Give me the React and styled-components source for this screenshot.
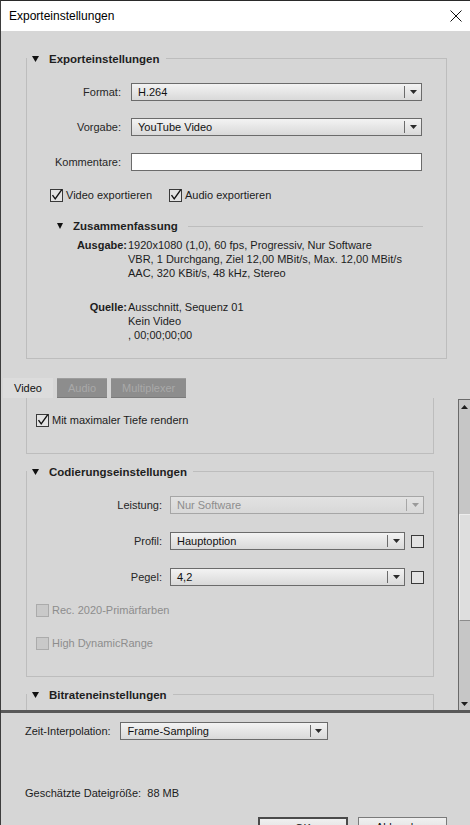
import React from 'react';
import styled, { createGlobalStyle } from 'styled-components';

const GlobalStyle = createGlobalStyle`
  html, body {
    margin: 0;
    padding: 0;
    background: #d6d6d6;
  }
  body {
    font-family: "Liberation Sans", Arial, sans-serif;
    font-size: 11px;
    color: #1c1c1c;
  }
  * { box-sizing: border-box; }
`;

const Window = styled.div`
  width: 470px;
  height: 825px;
  border-top: 1px solid #2a2a2a;
  border-left: 1px solid #3d3d3d;
  background: #d6d6d6;
  display: flex;
  flex-direction: column;
  overflow: hidden;
`;

const TitleBar = styled.div`
  flex: 0 0 30px;
  background: #ffffff;
  display: flex;
  align-items: center;
  justify-content: space-between;
  padding: 0 8px;
  font-size: 12px;
  color: #000;
`;

const Group = styled.fieldset`
  margin: ${p => p.$top}px ${p => p.$right}px 0 25px;
  padding: ${p => p.$pt}px 0 ${p => p.$pb}px;
  border: 1px solid #bdbdbd;
  min-width: 0;
  flex-shrink: 0;
`;

const Legend = styled.legend`
  padding: 0 6px 0 5px;
  margin: 0;
  line-height: 14px;
`;

const HeaderInner = styled.span`
  display: inline-flex;
  align-items: center;
  gap: 10px;
  font-weight: bold;
  font-size: 11.5px;
  color: #1e1e1e;
`;

const FormGrid = styled.div`
  display: grid;
  grid-template-columns: ${p => p.$label}px 1fr;
  column-gap: ${p => p.$gap}px;
  row-gap: ${p => p.$rowGap}px;
  padding-right: ${p => p.$pr}px;
  align-items: center;
`;

const FieldLabel = styled.span`
  text-align: right;
  white-space: nowrap;
  color: #262626;
`;

const ControlCell = styled.div`
  display: flex;
  align-items: center;
  gap: 6px;
  min-width: 0;
`;

const SelectBox = styled.div`
  height: 18px;
  flex: ${p => (p.$width ? `0 0 ${p.$width}px` : '1')};
  min-width: 0;
  border: 1px solid ${p => (p.$disabled ? '#a6a6a6' : '#6b6b6b')};
  background: ${p => (p.$disabled
    ? 'linear-gradient(#e2e2e2, #d8d8d8)'
    : 'linear-gradient(#f3f3f3, #d9d9d9)')};
  color: ${p => (p.$disabled ? '#8d8d8d' : '#111')};
  display: flex;
  align-items: center;
`;

const SelectValue = styled.span`
  flex: 1;
  padding-left: ${p => p.$pad || 6}px;
  line-height: 16px;
  white-space: nowrap;
  overflow: hidden;
`;

const SelectArrow = styled.span`
  flex: 0 0 17px;
  height: 12px;
  border-left: 1px solid ${p => (p.$disabled ? '#a6a6a6' : '#6b6b6b')};
  display: flex;
  align-items: center;
  justify-content: center;
`;

const TextInput = styled.div`
  height: 18px;
  background: #ffffff;
  border: 1px solid #6b6b6b;
`;

const CheckRow = styled.div`
  display: flex;
  align-items: center;
  gap: 17px;
  height: 14px;
  margin-top: ${p => p.$mt}px;
  padding-left: ${p => p.$pl}px;
`;

const CheckItem = styled.label`
  display: flex;
  align-items: center;
  gap: 3px;
  white-space: nowrap;
  color: ${p => (p.$disabled ? '#8d8d8d' : '#1c1c1c')};
`;

const Box = styled.span`
  flex: 0 0 13px;
  width: 13px;
  height: 13px;
  border: 1px solid ${p => (p.$disabled ? '#ababab' : '#3a3a3a')};
  background: ${p => (p.$disabled ? '#c9c9c9' : '#e3e3e3')};
  display: flex;
`;

const SubHeader = styled.div`
  display: flex;
  align-items: center;
  gap: 10px;
  height: 14px;
  margin: 17px 23px 0 30px;
  font-weight: bold;
  font-size: 11.5px;
  color: #1e1e1e;
`;

const SubLine = styled.span`
  flex: 1;
  height: 1px;
  background: #bdbdbd;
`;

const Summary = styled.div`
  display: grid;
  grid-template-columns: 100px 1fr;
  column-gap: 1px;
  row-gap: 20px;
  margin-top: 5px;
  line-height: 14px;
`;

const SummaryLabel = styled.span`
  font-weight: bold;
  text-align: right;
`;

const TabStrip = styled.div`
  flex: 0 0 19px;
  display: flex;
  gap: 4px;
  padding-left: 2px;
  margin-top: 19px;
`;

const Tab = styled.div`
  padding: 0 11px;
  line-height: 18px;
  background: ${p => (p.$active ? '#dcdcdc' : '#8d8d8d')};
  color: ${p => (p.$active ? '#111' : '#a9a9a9')};
  border-top: 1px solid ${p => (p.$active ? '#dcdcdc' : '#9d9d9d')};
  border-bottom: ${p => (p.$active ? 'none' : '1px solid #7b7b7b')};
`;

const TabPanel = styled.div`
  flex: 1;
  min-height: 0;
  display: flex;
`;

const PanelContent = styled.div`
  flex: 1;
  min-width: 0;
  overflow: hidden;
`;

const ClippedBox = styled.div`
  margin: 0 24px 0 25px;
  padding: 15px 0 26px 9px;
  border: 1px solid #bdbdbd;
  border-top: none;
`;

const ScrollBar = styled.div`
  flex: 0 0 12px;
  margin-top: 1px;
  border-left: 1px solid #6a6a6a;
  border-top: 1px solid #6a6a6a;
  background: #c6c6c6;
  display: flex;
  flex-direction: column;
`;

const ScrollButton = styled.div`
  flex: 0 0 13px;
  display: flex;
  align-items: center;
  justify-content: center;
`;

const ScrollTrack = styled.div`
  flex: 1;
  display: flex;
  flex-direction: column;
`;

const Thumb = styled.div`
  margin-top: ${p => p.$offset}px;
  height: ${p => p.$size}px;
  background: #dedede;
  border-left: 1px solid #f2f2f2;
  border-top: 1px solid #ededed;
  border-bottom: 1px solid #8c8c8c;
`;

const Divider = styled.div`
  flex: 0 0 3px;
  background: #595959;
`;

const Footer = styled.div`
  flex: 0 0 112px;
  padding: 9px 23px 0 24px;
  overflow: hidden;
`;

const FooterRow = styled.div`
  display: flex;
  align-items: center;
  gap: 9px;
`;

const SizeText = styled.div`
  margin-top: 46px;
  line-height: 14px;
  white-space: pre;
`;

const Buttons = styled.div`
  display: flex;
  justify-content: flex-end;
  gap: 10px;
  margin-top: 17px;
`;

const Button = styled.div`
  width: ${p => p.$width}px;
  height: 22px;
  border: ${p => (p.$default ? '2px solid #4a4a4a' : '1px solid #7a7a7a')};
  background: linear-gradient(#f0f0f0, #dadada);
  text-align: center;
  line-height: 18px;
  color: #111;
`;

function Triangle({ w = 7, h = 6, color = '#111', up }) {
  return (
    <svg width={w} height={h} viewBox={`0 0 ${w} ${h}`}>
      <path d={up ? `M0 ${h}H${w}L${w / 2} 0z` : `M0 0H${w}L${w / 2} ${h}z`} fill={color} />
    </svg>
  );
}

function Select({ value, disabled, width, pad }) {
  return (
    <SelectBox $disabled={disabled} $width={width}>
      <SelectValue $pad={pad}>{value}</SelectValue>
      <SelectArrow $disabled={disabled}>
        <Triangle w={7} h={4} color={disabled ? '#9a9a9a' : '#2b2b2b'} />
      </SelectArrow>
    </SelectBox>
  );
}

function Checkbox({ checked, disabled, label }) {
  return (
    <CheckItem $disabled={disabled}>
      <Box $disabled={disabled}>
        {checked && (
          <svg width="13" height="13" viewBox="0 0 13 13" style={{ overflow: 'visible', margin: '-1px' }}>
            <path d="M2.5 6.2L5.2 9.8L11.8 0.6" fill="none" stroke="#111" strokeWidth="1.4" />
          </svg>
        )}
      </Box>
      {label}
    </CheckItem>
  );
}

function GroupHeader({ title }) {
  return (
    <Legend>
      <HeaderInner>
        <Triangle />
        {title}
      </HeaderInner>
    </Legend>
  );
}

export default function App() {
  return (
    <>
      <GlobalStyle />
      <Window>
        <TitleBar>
          <span>Exporteinstellungen</span>
          <svg width="12" height="12" viewBox="0 0 12 12">
            <path d="M0.5 0.5L11.5 11.5M11.5 0.5L0.5 11.5" stroke="#111" strokeWidth="1" />
          </svg>
        </TitleBar>

        <Group $top={20} $right={23} $pt={17} $pb={16}>
          <GroupHeader title="Exporteinstellungen" />
          <FormGrid $label={94} $gap={10} $rowGap={17} $pr={24}>
            <FieldLabel>Format:</FieldLabel>
            <Select value="H.264" />
            <FieldLabel>Vorgabe:</FieldLabel>
            <Select value="YouTube Video" />
            <FieldLabel>Kommentare:</FieldLabel>
            <TextInput />
          </FormGrid>
          <CheckRow $mt={17} $pl={23}>
            <Checkbox checked label="Video exportieren" />
            <Checkbox checked label="Audio exportieren" />
          </CheckRow>
          <SubHeader>
            <Triangle w={6} h={6} />
            Zusammenfassung
            <SubLine />
          </SubHeader>
          <Summary>
            <SummaryLabel>Ausgabe:</SummaryLabel>
            <div>
              1920x1080 (1,0), 60 fps, Progressiv, Nur Software<br />
              VBR, 1 Durchgang, Ziel 12,00 MBit/s, Max. 12,00 MBit/s<br />
              AAC, 320 KBit/s, 48 kHz, Stereo
            </div>
            <SummaryLabel>Quelle:</SummaryLabel>
            <div>
              Ausschnitt, Sequenz 01<br />
              Kein Video<br />
              , 00;00;00;00
            </div>
          </Summary>
        </Group>

        <TabStrip>
          <Tab $active>Video</Tab>
          <Tab>Audio</Tab>
          <Tab>Multiplexer</Tab>
        </TabStrip>

        <TabPanel>
          <PanelContent>
            <ClippedBox>
              <CheckRow $mt={0} $pl={0}>
                <Checkbox checked label="Mit maximaler Tiefe rendern" />
              </CheckRow>
            </ClippedBox>

            <Group $top={10} $right={24} $pt={17} $pb={26}>
              <GroupHeader title="Codierungseinstellungen" />
              <FormGrid $label={135} $gap={8} $rowGap={18} $pr={9}>
                <FieldLabel>Leistung:</FieldLabel>
                <Select value="Nur Software" disabled />
                <FieldLabel>Profil:</FieldLabel>
                <ControlCell>
                  <Select value="Hauptoption" />
                  <Box />
                </ControlCell>
                <FieldLabel>Pegel:</FieldLabel>
                <ControlCell>
                  <Select value="4,2" />
                  <Box />
                </ControlCell>
              </FormGrid>
              <CheckRow $mt={17} $pl={9}>
                <Checkbox disabled label="Rec. 2020-Primärfarben" />
              </CheckRow>
              <CheckRow $mt={19} $pl={9}>
                <Checkbox disabled label="High DynamicRange" />
              </CheckRow>
            </Group>

            <Group $top={10} $right={24} $pt={60} $pb={0}>
              <GroupHeader title="Bitrateneinstellungen" />
            </Group>
          </PanelContent>

          <ScrollBar>
            <ScrollButton>
              <Triangle w={7} h={4} up color="#1e1e1e" />
            </ScrollButton>
            <ScrollTrack>
              <Thumb $offset={101} $size={107} />
            </ScrollTrack>
            <ScrollButton>
              <Triangle w={7} h={4} color="#1e1e1e" />
            </ScrollButton>
          </ScrollBar>
        </TabPanel>

        <Divider />

        <Footer>
          <FooterRow>
            <span>Zeit-Interpolation:</span>
            <Select value="Frame-Sampling" width={208} pad={7} />
          </FooterRow>
          <SizeText>Geschätzte Dateigröße:  88 MB</SizeText>
          <Buttons>
            <Button $default $width={90}>OK</Button>
            <Button $width={89}>Abbrechen</Button>
          </Buttons>
        </Footer>
      </Window>
    </>
  );
}
